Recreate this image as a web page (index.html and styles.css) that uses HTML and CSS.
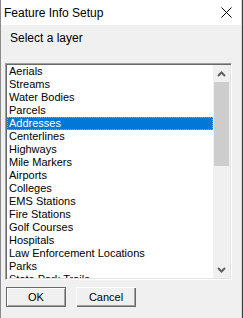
FILE: index.html
```html
<!DOCTYPE html>
<html lang="en">
<head>
  <meta charset="UTF-8">
  <title>Feature Info Setup</title>
  <link rel="stylesheet" href="styles.css">
</head>
<body>

  <!-- Dialog window -->
  <div class="window">
    <div class="titlebar">
      <span class="title">Feature Info Setup</span>
      <svg class="close" width="11" height="11" viewBox="0 0 11 11">
        <path d="M0.5 0.5 L10.5 10.5 M10.5 0.5 L0.5 10.5" stroke="#000" stroke-width="1" fill="none"/>
      </svg>
    </div>

    <div class="content">
      <div class="label">Select a layer</div>

      <!-- Layer list -->
      <div class="listbox">
        <ul class="items">
          <li>Aerials</li>
          <li>Streams</li>
          <li>Water Bodies</li>
          <li>Parcels</li>
          <li class="selected">Addresses</li>
          <li>Centerlines</li>
          <li>Highways</li>
          <li>Mile Markers</li>
          <li>Airports</li>
          <li>Colleges</li>
          <li>EMS Stations</li>
          <li>Fire Stations</li>
          <li>Golf Courses</li>
          <li>Hospitals</li>
          <li>Law Enforcement Locations</li>
          <li>Parks</li>
          <li>State Park Trails</li>
        </ul>
        <div class="scrollbar">
          <div class="arrow">
            <svg width="9" height="6" viewBox="0 0 9 6"><path d="M1 5 L4.5 1.5 L8 5" stroke="#606060" stroke-width="2" fill="none"/></svg>
          </div>
          <div class="track">
            <div class="thumb"></div>
          </div>
          <div class="arrow">
            <svg width="9" height="6" viewBox="0 0 9 6"><path d="M1 1 L4.5 4.5 L8 1" stroke="#606060" stroke-width="2" fill="none"/></svg>
          </div>
        </div>
      </div>

      <!-- Buttons -->
      <div class="buttons">
        <button class="btn default">OK</button>
        <button class="btn">Cancel</button>
      </div>
    </div>
  </div>

</body>
</html>
```

FILE: styles.css
```css
/* Basic Styling */
body {
  margin: 0;
  width: 243px;
  height: 318px;
  background-color: #3c3c3c;
  overflow: hidden;
  font-family: 'Liberation Sans', Arial, sans-serif;
}

/* Window frame */
.window {
  width: 240px;
  height: 318px;
  background-color: #f0f0f0;
  border-left: 1px solid #8a8a8a;
  border-right: 1px solid #d8d8d8;
}

/* Title bar */
.titlebar {
  height: 25px;
  background-color: #ffffff;
  display: flex;
  align-items: center;
  justify-content: space-between;
  padding: 0 9px 0 3px;
}

.title {
  font-family: 'Liberation Sans', Arial, sans-serif;
  font-size: 12px;
  color: #000;
  margin-top: 1px;
}

.close {
  display: block;
}

.content {
  padding: 6px 0 0 4px;
}

.label {
  font-family: 'Liberation Sans', Arial, sans-serif;
  font-size: 12px;
  color: #000;
  padding-left: 5px;
  height: 32px;
}

/* List box with sunken border */
.listbox {
  width: 227px;
  height: 217px;
  box-sizing: border-box;
  display: flex;
  background-color: #fff;
  border-top: 1px solid #a0a0a0;
  border-left: 1px solid #a0a0a0;
  border-bottom: 1px solid #ffffff;
  border-right: 1px solid #ffffff;
  box-shadow: inset 1px 1px 0 #696969, inset -1px -1px 0 #e3e3e3;
  padding: 1px;
  overflow: hidden;
}

.items {
  flex: 1;
  list-style: none;
  margin: 0;
  padding: 0;
  overflow: hidden;
}

.items li {
  font-size: 11px;
  line-height: 13px;
  height: 13px;
  padding-left: 2px;
  color: #000;
  white-space: nowrap;
}

.items li.selected {
  background-color: #0078d7;
  color: #fff;
  outline: 1px dotted #ff8c1a;
  outline-offset: -1px;
}

/* Scroll bar */
.scrollbar {
  width: 17px;
  display: flex;
  flex-direction: column;
  background-color: #f0f0f0;
}

.arrow {
  height: 17px;
  display: flex;
  align-items: center;
  justify-content: center;
}

.track {
  flex: 1;
  padding: 0 1px;
}

.thumb {
  height: 84px;
  background-color: #cdcdcd;
}

/* Buttons */
.buttons {
  display: flex;
  gap: 10px;
  margin-top: 7px;
  padding-left: 1px;
}

.btn {
  width: 60px;
  height: 20px;
  padding: 0;
  font-family: 'Liberation Sans', Arial, sans-serif;
  font-size: 11px;
  color: #000;
  background-color: #f0f0f0;
  border: none;
  box-shadow: inset 1px 1px 0 #ffffff, inset -1px -1px 0 #696969, inset -2px -2px 0 #a0a0a0;
}

.btn.default {
  box-shadow: inset 0 0 0 1px #696969, inset 2px 2px 0 #ffffff, inset -2px -2px 0 #a0a0a0;
}
```
